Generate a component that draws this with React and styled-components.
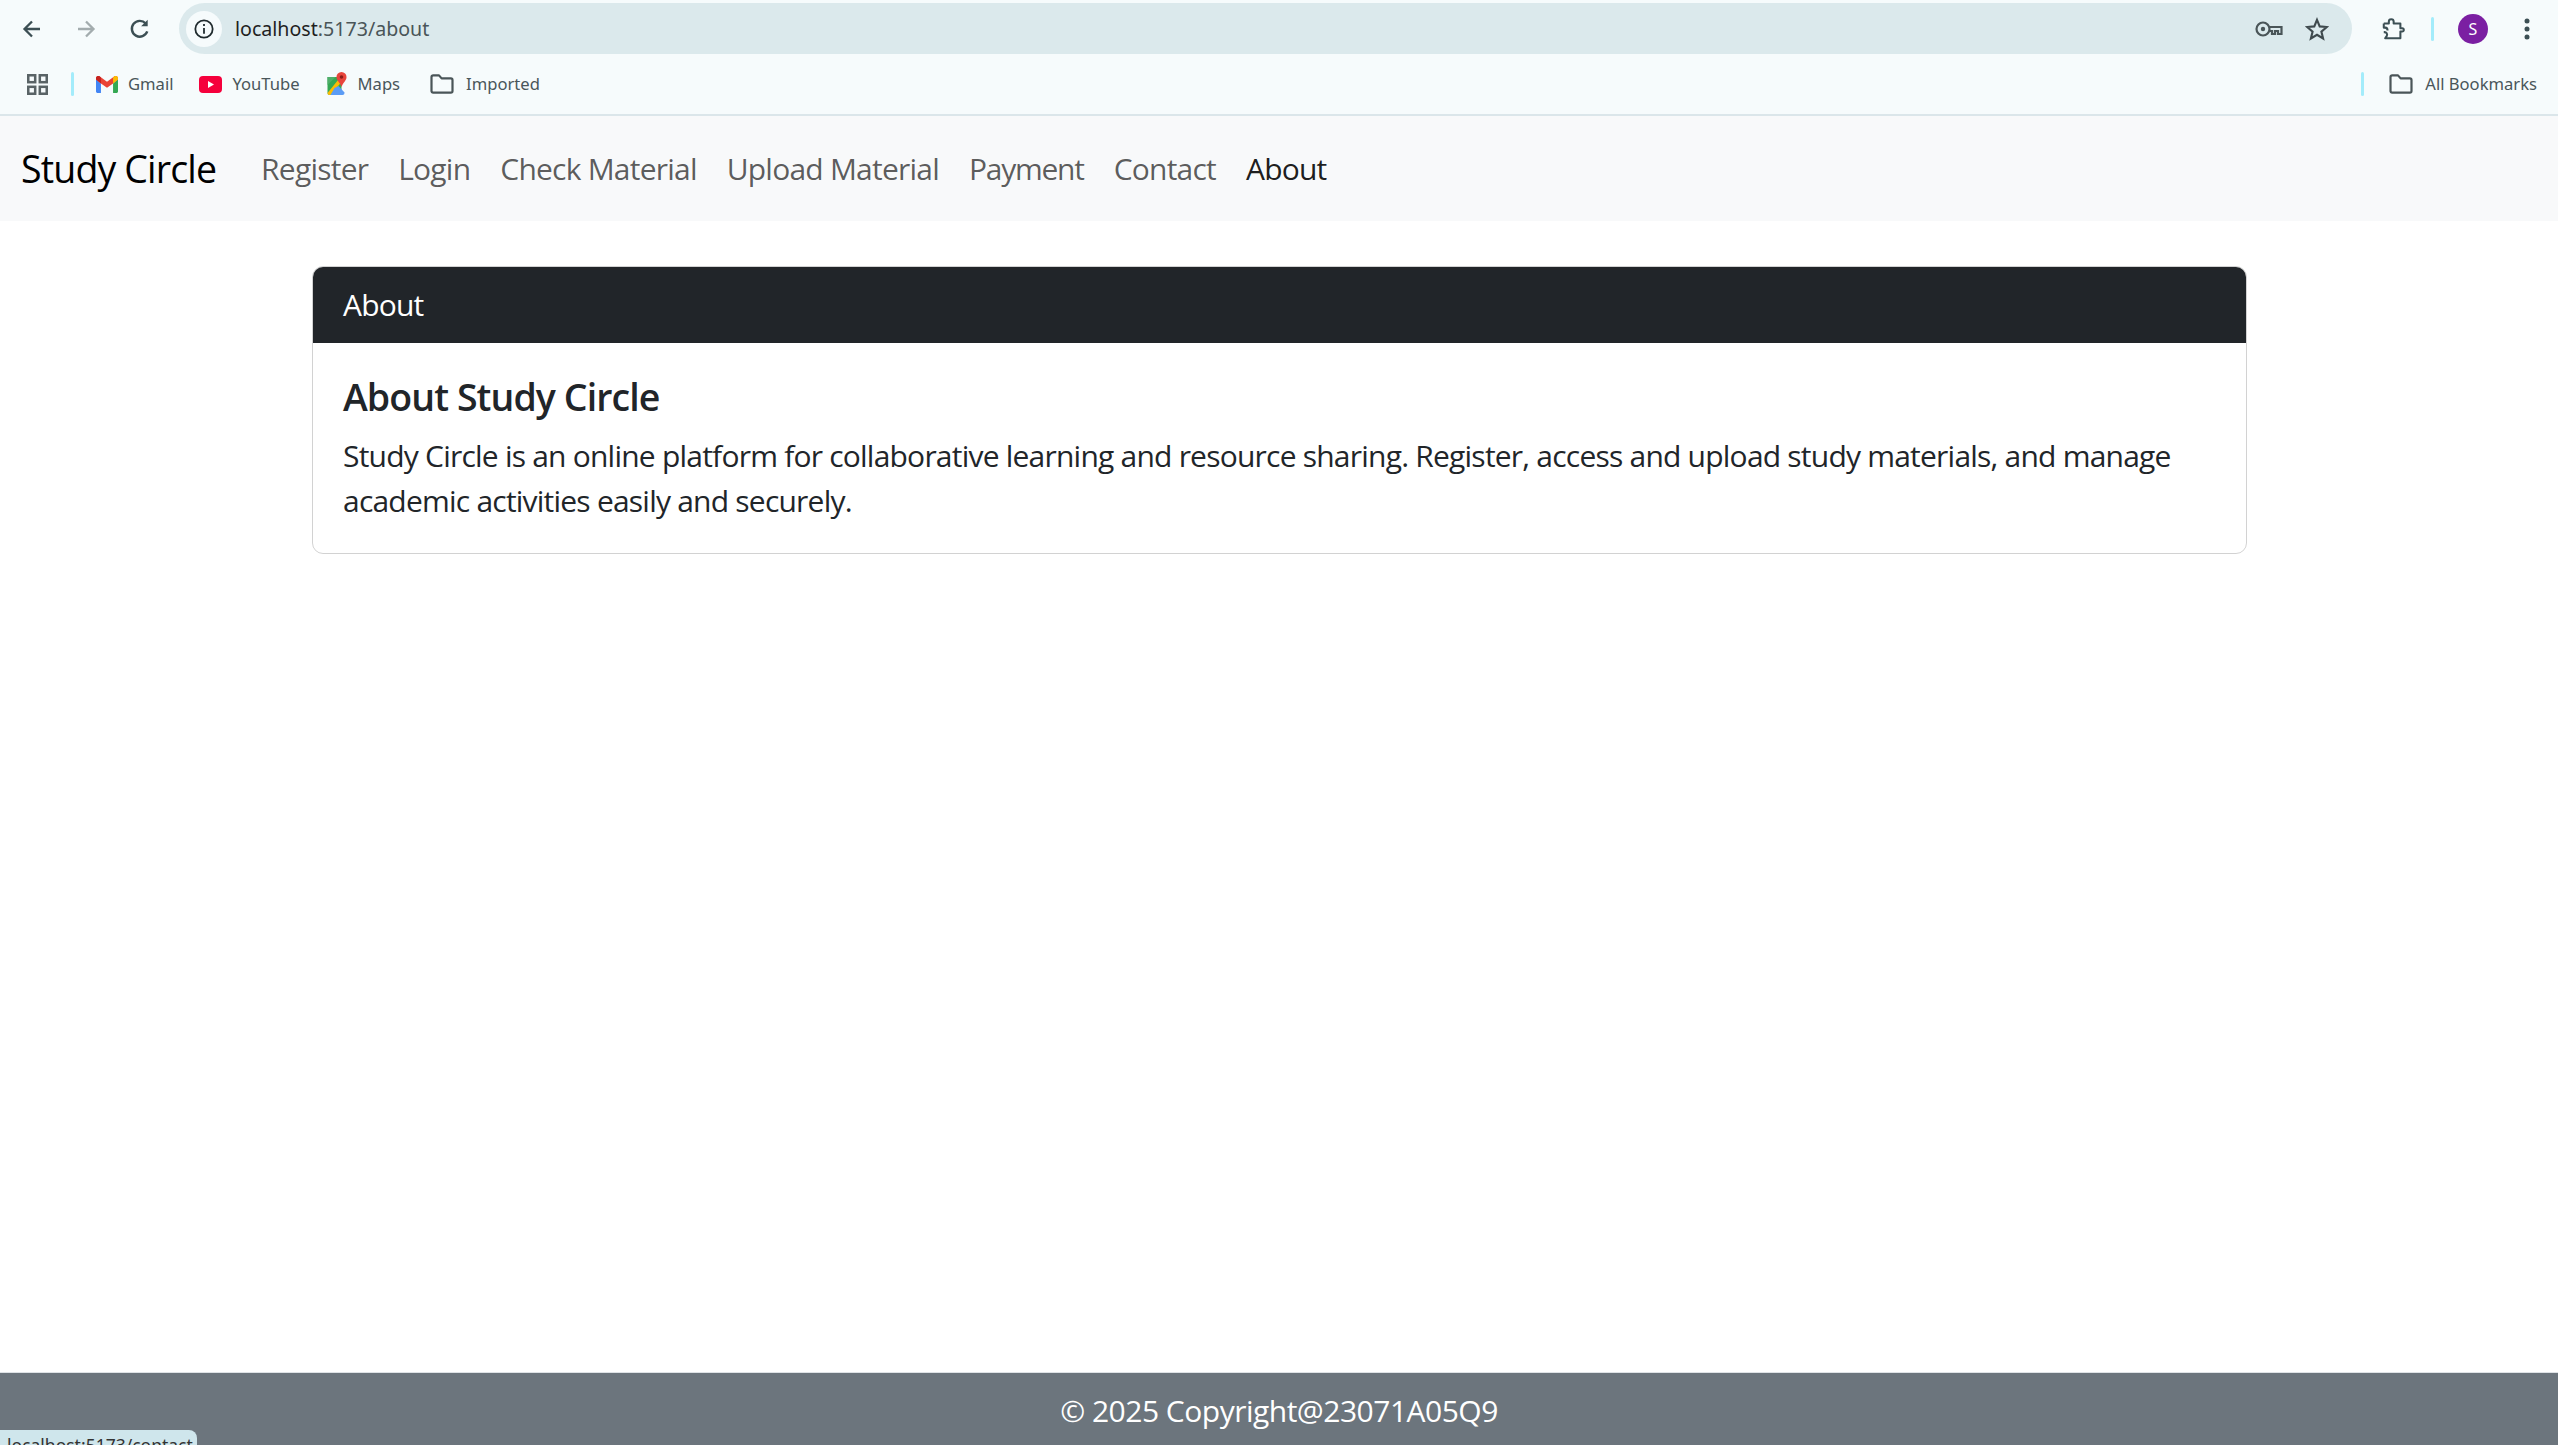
import React from 'react'
import styled, { createGlobalStyle } from 'styled-components'

const GlobalStyle = createGlobalStyle`
  html, body { margin: 0; padding: 0; height: 100%; background: #fff; }
  body { font-family: "Open Sans", "Noto Sans", sans-serif; overflow: hidden; }
  * { box-sizing: border-box; }
`

const Page = styled.div`
  position: relative;
  display: flex;
  flex-direction: column;
  height: 1445px;
  overflow: hidden;
`

const BrowserBar = styled.header`
  background: #f6fbfc;
  border-bottom: 2px solid #dbe6ea;
  height: 116px;
  flex: none;
`

const Toolbar = styled.div`
  display: flex;
  align-items: center;
  height: 58px;
  padding: 0 19px 0 0;
`

const NavIcon = styled.span`
  display: flex;
  align-items: center;
  justify-content: center;
  width: 24px;
  margin-left: ${p => p.$ml}px;
  color: ${p => p.$color || '#3c4f54'};
`

const Omnibox = styled.div`
  flex: 1;
  display: flex;
  align-items: center;
  height: 51px;
  margin-left: 27px;
  margin-top: -1px;
  padding: 0 23px 0 7px;
  border-radius: 26px;
  background: #dbe9ec;
`

const InfoBadge = styled.span`
  display: flex;
  align-items: center;
  justify-content: center;
  width: 36px;
  height: 36px;
  border-radius: 18px;
  background: #f6fbfc;
  color: #1f2a2d;
`

const Url = styled.span`
  margin-left: 13px;
  font-family: "Noto Sans", sans-serif;
  font-size: 19.6px;
  color: #1f1f1f;
  white-space: nowrap;
  span { color: #4a5558; }
`

const Spacer = styled.span`
  flex: 1;
`

const ToolDivider = styled.span`
  display: block;
  width: 3px;
  height: 24px;
  background: #a3ecfb;
  border-radius: 2px;
  margin-left: ${p => p.$ml}px;
`

const Avatar = styled.span`
  display: flex;
  align-items: center;
  justify-content: center;
  width: 30px;
  height: 30px;
  margin-left: 24px;
  border-radius: 50%;
  background: #7b1fa2;
  color: #fff;
  font-family: "Noto Sans", sans-serif;
  font-size: 16px;
`

const BookmarkRow = styled.div`
  display: flex;
  align-items: center;
  height: 56px;
  padding: 0 21px 0 27px;
  margin-top: -2px;
`

const Bookmark = styled.span`
  display: flex;
  align-items: center;
  margin-left: ${p => p.$ml}px;
  gap: ${p => p.$gap || 10}px;
  font-family: "Noto Sans", sans-serif;
  font-size: 16.6px;
  color: #49565a;
  white-space: nowrap;
`

const BookmarkLabel = styled.span`
  margin-top: -2px;
`

const Navbar = styled.nav`
  flex: none;
  display: flex;
  align-items: center;
  height: 105px;
  padding: 0 22px 0 21px;
  background: #f8f9fa;
`

const Brand = styled.a`
  padding-top: 2px;
  font-size: 37.5px;
  line-height: 1.5;
  letter-spacing: -0.85px;
  color: #000;
  margin-right: 30px;
`

const NavLink = styled.a`
  padding: 0 15px;
  font-size: 30px;
  letter-spacing: ${p => p.$ls || -0.78}px;
  color: ${p => (p.$active ? 'rgba(0,0,0,.9)' : 'rgba(0,0,0,.65)')};
`

const Main = styled.main`
  flex: 1;
  padding: 45px 311px 0 312px;
`

const Card = styled.section`
  border: 1px solid rgba(0,0,0,.175);
  border-radius: 11px;
  overflow: hidden;
`

const CardHeader = styled.div`
  padding: 15px 30px 16px;
  font-size: 30px;
  line-height: 45px;
  letter-spacing: -0.8px;
  color: #fff;
  background: #212529;
`

const CardBody = styled.div`
  padding: 31px 30px 30px;
  color: #212529;
`

const CardTitle = styled.h5`
  margin: 0 0 14px;
  font-size: 37.5px;
  line-height: 45px;
  font-weight: 600;
  letter-spacing: -0.92px;
`

const CardText = styled.p`
  margin: 0;
  font-size: 30px;
  line-height: 45px;
  letter-spacing: -0.78px;
`

const Footer = styled.footer`
  flex: none;
  height: 73px;
  border-top: 1px solid #dee2e6;
  background: #6c757d;
  color: #fff;
  text-align: center;
  font-size: 30px;
  line-height: 76px;
  letter-spacing: -0.5px;
`

const StatusBubble = styled.div`
  position: absolute;
  left: 0;
  bottom: 0;
  width: 197px;
  height: 15px;
  padding-left: 7px;
  overflow: hidden;
  border-top-right-radius: 8px;
  background: #cfe6ec;
  font-family: "Noto Sans", sans-serif;
  font-size: 17.5px;
  line-height: 30px;
  color: #333;
  white-space: nowrap;
`

const Arrow = ({ flip }) => (
  <svg width="20" height="20" viewBox="0 0 20 20" fill="none" stroke="currentColor" strokeWidth="2.3"
    style={flip ? { transform: 'scaleX(-1)' } : undefined}>
    <path d="M18 10H3M10 2.5 2.5 10l7.5 7.5" />
  </svg>
)

const Reload = () => (
  <svg width="22" height="22" viewBox="0 0 20 20" fill="none" stroke="currentColor" strokeWidth="2.2">
    <path d="M16.6 12.2A7.2 7.2 0 1 1 15.2 5" />
    <path d="M17 1.5v6h-6z" fill="currentColor" stroke="none" />
  </svg>
)

const Info = () => (
  <svg width="20" height="20" viewBox="0 0 18 18" fill="none" stroke="currentColor" strokeWidth="1.6">
    <circle cx="9" cy="9" r="7.8" />
    <path d="M9 8v5.2M9 4.6v1.8" />
  </svg>
)

const KeyIcon = () => (
  <svg width="28" height="16" viewBox="0 0 28 16" fill="none" stroke="#4a5558" strokeWidth="2.2">
    <circle cx="8" cy="8" r="6.5" />
    <circle cx="8" cy="8" r="2.2" fill="#4a5558" stroke="none" />
    <path d="M14.5 6H26.5V13H23V10H20V13H17V10H14.5" />
  </svg>
)

const StarIcon = () => (
  <svg width="24" height="24" viewBox="0 0 24 24" fill="none" stroke="#3f4a4e" strokeWidth="2.1" strokeLinejoin="miter">
    <path d="M12 2.8 14.7 9.4 21.8 10 16.4 14.6 18.1 21.5 12 17.8 5.9 21.5 7.6 14.6 2.2 10 9.3 9.4Z" />
  </svg>
)

const PuzzleIcon = () => (
  <svg width="26" height="26" viewBox="0 0 26 26" fill="none" stroke="#3c4f54" strokeWidth="2.2" strokeLinejoin="round">
    <path d="M3 7h5.5V5a2.6 2.6 0 0 1 5.2 0v2H21v5.3h2a1.6 1.6 0 0 1 0 3.4h-2V23H4.5l1.8-2.6c1-2-.4-4-2.5-4H3" />
    <path d="M3 7v4.5h1.5c2 .2 2.6 1.5 2.6 3" />
  </svg>
)

const Dots = () => (
  <svg width="6" height="22" viewBox="0 0 6 22" fill="#3c4f54">
    <circle cx="3" cy="3" r="2.5" />
    <circle cx="3" cy="11" r="2.5" />
    <circle cx="3" cy="19" r="2.5" />
  </svg>
)

const AppsIcon = () => (
  <svg width="21" height="21" viewBox="0 0 20 20" fill="none" stroke="#596366" strokeWidth="2.4">
    <rect x="1.2" y="1.2" width="6.6" height="6.6" />
    <rect x="12.2" y="1.2" width="6.6" height="6.6" />
    <rect x="1.2" y="12.2" width="6.6" height="6.6" />
    <rect x="12.2" y="12.2" width="6.6" height="6.6" />
  </svg>
)

const GmailIcon = () => (
  <svg width="22" height="17" viewBox="0 0 20 16" preserveAspectRatio="none">
    <path d="M0 3v11.5C0 15.3.7 16 1.5 16H4.5V7Z" fill="#4285f4" />
    <path d="M15.5 7v9h3c.8 0 1.5-.7 1.5-1.5V3Z" fill="#34a853" />
    <path d="M4.5 7 0 3.2V2C0 .3 2-.6 3.2.3L10 5.4 16.8.3C18-.6 20 .3 20 2v1.2L15.5 7 10 11Z" fill="#ea4335" />
    <path d="M0 2c0-1.7 2-2.6 3.2-1.7L4.5 1.3V7L0 3.2Z" fill="#c5221f" />
    <path d="M15.5 1.3 16.8.3C18-.6 20 .3 20 2v1.2L15.5 7Z" fill="#fbbc04" />
  </svg>
)

const YoutubeIcon = () => (
  <svg width="23" height="17" viewBox="0 0 23 17">
    <rect width="23" height="17" rx="4" fill="#f5003c" />
    <path d="M9 5v7l6-3.5Z" fill="#fff" />
  </svg>
)

const MapsIcon = () => (
  <svg width="21" height="24" viewBox="0 0 20 24">
    <path d="M0 5h14v18H2a2 2 0 0 1-2-2Z" fill="#34a853" />
    <path d="M0 21 13 5h1v5L3 23H2a2 2 0 0 1-2-2Z" fill="#fbbc04" />
    <path d="M7 16 3 23h12a2 2 0 0 0 2-2v-.5L11 14Z" fill="#5b9cf5" />
    <path d="M0 5h8L0 13Z" fill="#4fae6a" />
    <path d="M14 0a5 5 0 0 1 5 5.2c0 3.2-3.4 5.4-5 9.8-1.4-4.4-5-6.6-5-9.8A5 5 0 0 1 14 0Z" fill="#e8453c" />
    <circle cx="14" cy="5" r="1.8" fill="#8c1d18" />
  </svg>
)

const FolderIcon = () => (
  <svg width="24" height="20" viewBox="0 0 24 20" fill="none" stroke="#4a5558" strokeWidth="2.2" strokeLinejoin="round">
    <path d="M1.5 3c0-.9.7-1.6 1.6-1.6H9l2.6 3h9.3c.9 0 1.6.7 1.6 1.6v11c0 .9-.7 1.6-1.6 1.6H3.1c-.9 0-1.6-.7-1.6-1.6Z" />
  </svg>
)

export default function App() {
  return (
    <Page>
      <GlobalStyle />
      <BrowserBar>
        <Toolbar>
          <NavIcon $ml={20}><Arrow /></NavIcon>
          <NavIcon $ml={30} $color="#a3acae"><Arrow flip /></NavIcon>
          <NavIcon $ml={30}><Reload /></NavIcon>
          <Omnibox>
            <InfoBadge><Info /></InfoBadge>
            <Url>localhost<span>:5173/about</span></Url>
            <Spacer />
            <KeyIcon />
            <NavIcon $ml={22}><StarIcon /></NavIcon>
          </Omnibox>
          <NavIcon $ml={29}><PuzzleIcon /></NavIcon>
          <ToolDivider $ml={26} />
          <Avatar>S</Avatar>
          <NavIcon $ml={27}><Dots /></NavIcon>
        </Toolbar>
        <BookmarkRow>
          <AppsIcon />
          <ToolDivider $ml={23} />
          <Bookmark $ml={22}><GmailIcon /><BookmarkLabel>Gmail</BookmarkLabel></Bookmark>
          <Bookmark $ml={26}><YoutubeIcon /><BookmarkLabel>YouTube</BookmarkLabel></Bookmark>
          <Bookmark $ml={27}><MapsIcon /><BookmarkLabel>Maps</BookmarkLabel></Bookmark>
          <Bookmark $ml={30} $gap={12}><FolderIcon /><BookmarkLabel>Imported</BookmarkLabel></Bookmark>
          <Spacer />
          <ToolDivider />
          <Bookmark $ml={25} $gap={12}><FolderIcon /><BookmarkLabel>All Bookmarks</BookmarkLabel></Bookmark>
        </BookmarkRow>
      </BrowserBar>
      <Navbar>
        <Brand>Study Circle</Brand>
        <NavLink>Register</NavLink>
        <NavLink>Login</NavLink>
        <NavLink>Check Material</NavLink>
        <NavLink>Upload Material</NavLink>
        <NavLink $ls={-1.25}>Payment</NavLink>
        <NavLink>Contact</NavLink>
        <NavLink $active>About</NavLink>
      </Navbar>
      <Main>
        <Card>
          <CardHeader>About</CardHeader>
          <CardBody>
            <CardTitle>About Study Circle</CardTitle>
            <CardText>
              Study Circle is an online platform for collaborative learning and resource sharing. Register, access and upload study materials, and manage academic activities easily and securely.
            </CardText>
          </CardBody>
        </Card>
      </Main>
      <Footer>© 2025 Copyright@23071A05Q9</Footer>
      <StatusBubble>localhost:5173/contact</StatusBubble>
    </Page>
  )
}
